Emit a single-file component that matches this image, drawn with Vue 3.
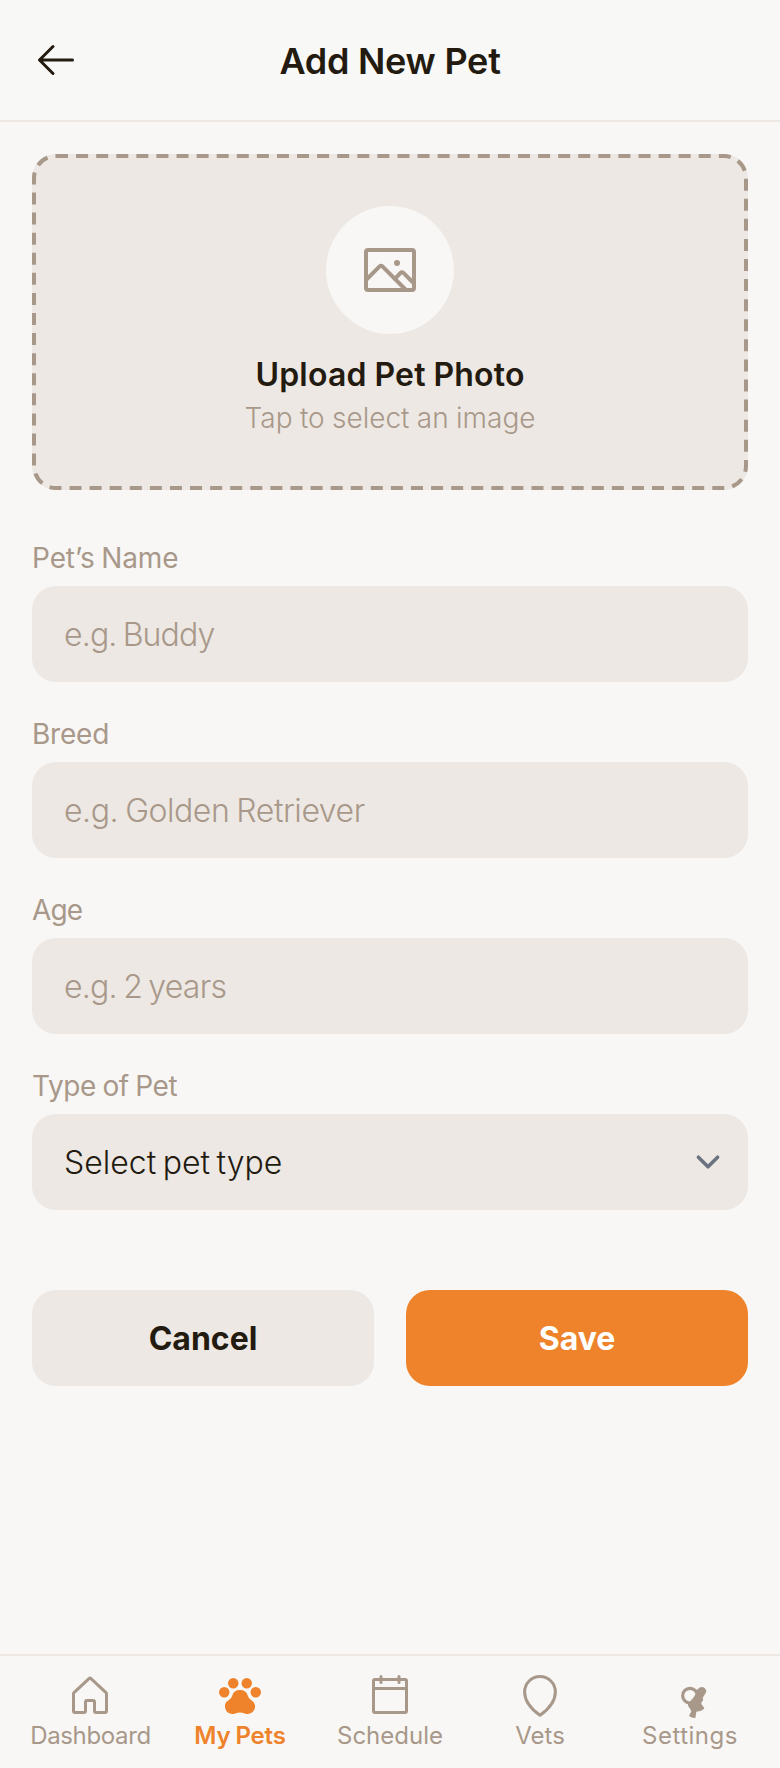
<script setup>
import { ref } from 'vue'

const fields = [
  { id: 'name', label: 'Pet’s Name', placeholder: 'e.g. Buddy' },
  { id: 'breed', label: 'Breed', placeholder: 'e.g. Golden Retriever' },
  { id: 'age', label: 'Age', placeholder: 'e.g. 2 years' },
]
const values = ref({ name: '', breed: '', age: '' })
</script>

<template>
  <div class="screen">
    <header class="header">
      <button class="back" aria-label="Back">
        <svg class="line" viewBox="0 0 256 256"><path d="M216,128H40M112,56L40,128L112,200" /></svg>
      </button>
      <h1 class="title"><span>Add New Pet</span></h1>
      <span class="spacer"></span>
    </header>

    <main class="content">
      <div class="upload">
        <svg class="dashes" viewBox="0 0 716 336"><rect x="2" y="2" width="712" height="332" rx="22" /></svg>
        <div class="circle">
          <svg class="line" viewBox="0 0 256 256">
            <rect x="32" y="48" width="192" height="160" rx="8" />
            <path d="M32,168L86.3,113.7a8,8,0,0,1,11.4,0L192,208" />
            <path d="M147.3,163.3L170.3,139.7a8,8,0,0,1,11.4,0L224,182" />
            <circle class="dot" cx="156" cy="100" r="12" />
          </svg>
        </div>
        <p class="upload-title"><span>Upload Pet Photo</span></p>
        <p class="upload-sub"><span>Tap to select an image</span></p>
      </div>

      <div v-for="f in fields" :key="f.id" class="field">
        <label :for="f.id" :class="['label', 'label-' + f.id]">{{ f.label }}</label>
        <input :id="f.id" v-model="values[f.id]" :class="['control', 'control-' + f.id]" :placeholder="f.placeholder" />
      </div>

      <div class="field">
        <span class="label label-type">Type of Pet</span>
        <div class="control select">
          <span>Select pet type</span>
          <svg viewBox="0 0 20 20"><path d="M6 8l4 4 4-4" /></svg>
        </div>
      </div>

      <div class="actions">
        <button class="button cancel">Cancel</button>
        <button class="button save">Save</button>
      </div>
    </main>

    <nav class="nav">
      <a class="tab dashboard">
        <svg class="line" viewBox="0 0 256 256">
          <path d="M152,208V160a8,8,0,0,0-8-8H112a8,8,0,0,0-8,8v48a8,8,0,0,1-8,8H48a8,8,0,0,1-8-8V115.5a8.3,8.3,0,0,1,2.6-5.9l80-74.7a8,8,0,0,1,10.8,0l80,74.7a8.3,8.3,0,0,1,2.6,5.9V208a8,8,0,0,1-8,8H160A8,8,0,0,1,152,208Z" />
        </svg>
        <span>Dashboard</span>
      </a>
      <a class="tab pets active">
        <svg class="solid" viewBox="0 0 256 256">
          <path d="M240,108a28,28,0,1,1-28-28A28,28,0,0,1,240,108ZM72,108a28,28,0,1,0-28,28A28,28,0,0,0,72,108ZM92,88A28,28,0,1,0,64,60,28,28,0,0,0,92,88Zm72,0a28,28,0,1,0-28-28A28,28,0,0,0,164,88Zm23.12,60.86a35.3,35.3,0,0,1-16.87-21.14,44,44,0,0,0-84.5,0A35.25,35.25,0,0,1,69,148.82,40,40,0,0,0,88,224a39.48,39.48,0,0,0,15.52-3.13,64.09,64.09,0,0,1,48.87,0,40,40,0,0,0,34.73-72Z" />
        </svg>
        <span>My Pets</span>
      </a>
      <a class="tab schedule">
        <svg class="line" viewBox="0 0 256 256">
          <rect x="40" y="40" width="176" height="176" rx="8" />
          <path d="M176,24V56M80,24V56M40,88H216" />
        </svg>
        <span>Schedule</span>
      </a>
      <a class="tab vets">
        <svg class="line" viewBox="0 0 256 256">
          <path d="M210,106C210,164,154,212,128,231C102,212,46,164,46,106a82,82,0,0,1,164,0Z" />
        </svg>
        <span>Vets</span>
      </a>
      <a class="tab settings">
        <svg class="solid" viewBox="0 0 144 144">
          <circle class="ring" cx="72" cy="71" r="22" />
          <path d="M84,57L93,54L100,47Q108,43 115,47Q121,52 121,57L119,63L110,78L112,84L107,90L106,96L115,108L113,112L103,117L91,119L90,126L88,138L79,137L69,132L76,118L74,113L66,101L66,94L71,89L82,77L89,66Z" />
        </svg>
        <span>Settings</span>
      </a>
    </nav>
  </div>
</template>

<style>
body {
  margin: 0;
  background: #f8f7f5;
}
</style>

<style scoped>
.screen {
  display: flex;
  flex-direction: column;
  width: 780px;
  height: 1768px;
  box-sizing: border-box;
  background: #f8f7f5;
  color: #231a10;
  font-family: Inter, 'Liberation Sans', sans-serif;
}
button,
input {
  font-family: inherit;
  border: 0;
  padding: 0;
  margin: 0;
}
svg {
  display: block;
  flex: none;
}
.line {
  fill: none;
  stroke: currentColor;
  stroke-width: 16;
  stroke-linecap: round;
  stroke-linejoin: round;
}
.dot {
  fill: currentColor;
  stroke: none;
}
.solid {
  fill: currentColor;
}
.ring {
  fill: none;
  stroke: currentColor;
  stroke-width: 9.5;
}
.header {
  display: flex;
  align-items: center;
  height: 122px;
  padding: 0 32px;
  box-sizing: border-box;
  border-bottom: 2px solid #ede8e3;
  background: #f8f8f6;
}
.back {
  background: none;
  color: inherit;
}
.back svg,
.spacer {
  width: 48px;
  height: 48px;
}
.title {
  flex: 1;
  margin: 0;
  padding-top: 2px;
  text-align: center;
  font-size: 36px;
  line-height: 48px;
  font-weight: 600;
  letter-spacing: -0.25px;
}
.content {
  flex: 1;
  padding: 32px;
}
.upload {
  position: relative;
  height: 336px;
  box-sizing: border-box;
  border-radius: 24px;
  background: #ede8e3;
  padding-top: 52px;
  display: flex;
  flex-direction: column;
  align-items: center;
}
.dashes {
  position: absolute;
  inset: 0;
  width: 100%;
  height: 100%;
  fill: none;
  stroke: #a8988a;
  stroke-width: 4;
  stroke-dasharray: 12 8.086;
}
.circle {
  width: 128px;
  height: 128px;
  border-radius: 50%;
  background: #f8f7f5;
  color: #a8988a;
  display: flex;
  align-items: center;
  justify-content: center;
}
.circle svg {
  width: 64px;
  height: 64px;
}
.upload-title {
  margin: 17px 0 0;
  font-size: 32px;
  line-height: 48px;
  font-weight: 600;
  letter-spacing: 0.2px;
  word-spacing: -0.5px;
}
.upload-sub {
  margin: -1px 0 0;
  font-size: 28px;
  line-height: 40px;
  font-weight: 300;
  word-spacing: -0.5px;
  color: #a8988a;
}
.field {
  margin-top: 32px;
}
.upload + .field {
  margin-top: 48px;
}
.label {
  display: block;
  height: 48px;
  line-height: 40px;
  font-size: 28px;
  font-weight: 400;
  color: #a8988a;
}
.label-name {
  letter-spacing: -0.1px;
  word-spacing: -1.2px;
}
.label-breed {
  letter-spacing: -0.2px;
}
.label-age {
  letter-spacing: -0.9px;
}
.label-type {
  letter-spacing: -0.4px;
  word-spacing: -1px;
}
.control {
  display: flex;
  align-items: center;
  width: 100%;
  height: 96px;
  box-sizing: border-box;
  padding: 0 16px 0 32px;
  border-radius: 24px;
  background: #ede8e3;
  color: #231a10;
  font-size: 32px;
  font-weight: 300;
}
.control::placeholder {
  color: #a8988a;
  opacity: 1;
}
.control-name {
  letter-spacing: -0.85px;
  word-spacing: -2px;
}
.control-breed {
  letter-spacing: -0.45px;
  word-spacing: -1.5px;
}
.control-age {
  letter-spacing: -0.75px;
  word-spacing: -2px;
}
.select {
  justify-content: space-between;
  letter-spacing: 0;
  word-spacing: -2.5px;
}
.select svg {
  width: 48px;
  height: 48px;
  fill: none;
  stroke: #6b7280;
  stroke-width: 1.5;
  stroke-linecap: round;
  stroke-linejoin: round;
}
.actions {
  display: grid;
  grid-template-columns: 1fr 1fr;
  gap: 32px;
  margin-top: 80px;
}
.button {
  height: 96px;
  border-radius: 24px;
  font-size: 32px;
  font-weight: 650;
}
.cancel {
  background: #ede8e3;
  color: #231a10;
}
.save {
  background: #ee832b;
  color: #fff;
}
.nav {
  display: grid;
  grid-template-columns: repeat(5, 150px);
  justify-content: center;
  height: 114px;
  box-sizing: border-box;
  border-top: 2px solid #ede8e3;
  padding-top: 16px;
}
.tab {
  display: flex;
  flex-direction: column;
  align-items: center;
  color: #a8988a;
  font-size: 24px;
  line-height: 32px;
  font-weight: 400;
}
.tab svg {
  width: 48px;
  height: 48px;
}
.active {
  color: #ee832b;
  font-weight: 640;
  letter-spacing: -0.2px;
  word-spacing: -0.8px;
}
.dashboard {
  letter-spacing: -0.35px;
}
.dashboard span {
  padding-left: 1px;
}
.settings {
  letter-spacing: 0.5px;
}
</style>
